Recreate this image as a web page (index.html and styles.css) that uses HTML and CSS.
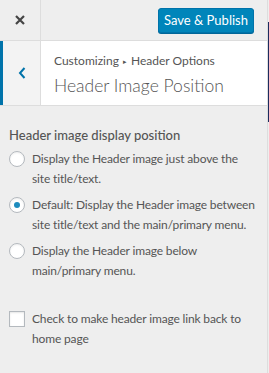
FILE: index.html
```html
<!DOCTYPE html>
<html lang="en">
<head>
  <meta charset="UTF-8">
  <meta name="viewport" content="width=device-width, initial-scale=1.0">
  <title>Customizer</title>
  <link rel="stylesheet" href="styles.css">
</head>
<body>
  <div id="wrap">
    <div id="panel">
      <!-- top bar -->
      <div id="top">
        <div id="close">
          <svg width="12" height="12" viewBox="0 0 12 12"><path d="M2 2 L10 10 M10 2 L2 10" stroke="#444" stroke-width="2.2"/></svg>
        </div>
        <button id="save">Save &amp; Publish</button>
      </div>
      <!-- section title -->
      <div id="sectionHead">
        <div id="back">
          <svg width="10" height="14" viewBox="0 0 10 14"><path d="M7.5 2 L3 7 L7.5 12" stroke="#0073aa" stroke-width="2" fill="none"/></svg>
        </div>
        <div id="titles">
          <p class="crumb">Customizing <span class="arrow">&#9656;</span> Header Options</p>
          <h3 class="title">Header Image Position</h3>
        </div>
      </div>
      <!-- controls -->
      <div id="controls">
        <div class="control">
          <p class="ctitle">Header image display position</p>
          <label class="opt"><span class="radio"></span><span>Display the Header image just above the site title/text.</span></label>
          <label class="opt"><span class="radio on"></span><span>Default: Display the Header image between site title/text and the main/primary menu.</span></label>
          <label class="opt"><span class="radio"></span><span>Display the Header image below main/primary menu.</span></label>
        </div>
        <div class="control">
          <label class="opt"><span class="check"></span><span>Check to make header image link back to home page</span></label>
        </div>
      </div>
    </div>
    <div id="edge"></div>
  </div>
</body>
</html>
```

FILE: styles.css
```css
body{
  margin: 0;
  background-color: #eee;
  font-family: Lato, "Open Sans", sans-serif;
  color: #555;
}
#wrap{
  display: flex;
  height: 373px;
}
#panel{
  width: 267px;
  border-right: 1px solid #ddd;
  background-color: #eee;
}
#edge{
  width: 1px;
  margin-top: 22px;
  height: 100px;
  background-color: #1c2b5e;
}
/* top bar */
#top{
  display: flex;
  align-items: center;
  height: 40px;
  border-bottom: 1px solid #ddd;
}
#close{
  width: 40px;
  height: 40px;
  border-right: 1px solid #ddd;
  display: flex;
  align-items: center;
  justify-content: center;
}
#save{
  margin-left: auto;
  margin-right: 13px;
  width: 96px;
  height: 25px;
  background-color: #0085ba;
  border: 1px solid #0073aa;
  border-radius: 3px;
  box-shadow: 0 1px 0 #006799;
  color: white;
  font-family: Lato, "Open Sans", sans-serif;
  font-size: 13px;
  padding: 0;
}
/* section header */
#sectionHead{
  display: flex;
  height: 64px;
  border-bottom: 1px solid #ddd;
  background-color: white;
}
#back{
  width: 37px;
  border-left: 3px solid #0073aa;
  border-right: 1px solid #ddd;
  background-color: #f3f3f3;
  display: flex;
  align-items: center;
  justify-content: center;
}
#titles{
  padding: 10px 0 0 13px;
}
.crumb{
  margin: 0;
  font-size: 12px;
  line-height: 20px;
  color: #555;
}
.arrow{
  font-size: 7px;
  position: relative;
  top: -1px;
  margin: 0 1px;
}
.title{
  margin: 2px 0 0;
  font-size: 17.5px;
  font-weight: 300;
  line-height: 24px;
  color: #555;
}
/* controls */
#controls{
  padding: 19px 9px 0;
}
.control{
  margin-bottom: 28px;
}
.ctitle{
  margin: 0 0 4px;
  font-size: 13px;
  font-weight: 500;
  line-height: 20px;
}
.opt{
  display: flex;
  align-items: flex-start;
  font-size: 12px;
  letter-spacing: -0.15px;
  line-height: 20px;
  margin-bottom: 6px;
}
.radio{
  flex: none;
  width: 14px;
  height: 14px;
  border: 1px solid #b4b9be;
  border-radius: 50%;
  background-color: white;
  margin: 2px 7px 0 0;
  box-shadow: inset 0 1px 2px rgba(0,0,0,0.07);
  display: flex;
  align-items: center;
  justify-content: center;
}
.on::after{
  content: "";
  width: 6px;
  height: 6px;
  border-radius: 50%;
  background-color: #1e8cbe;
}
.check{
  flex: none;
  width: 14px;
  height: 14px;
  border: 1px solid #b4b9be;
  background-color: white;
  margin: 2px 7px 0 0;
  box-shadow: inset 0 1px 2px rgba(0,0,0,0.1);
}
```
